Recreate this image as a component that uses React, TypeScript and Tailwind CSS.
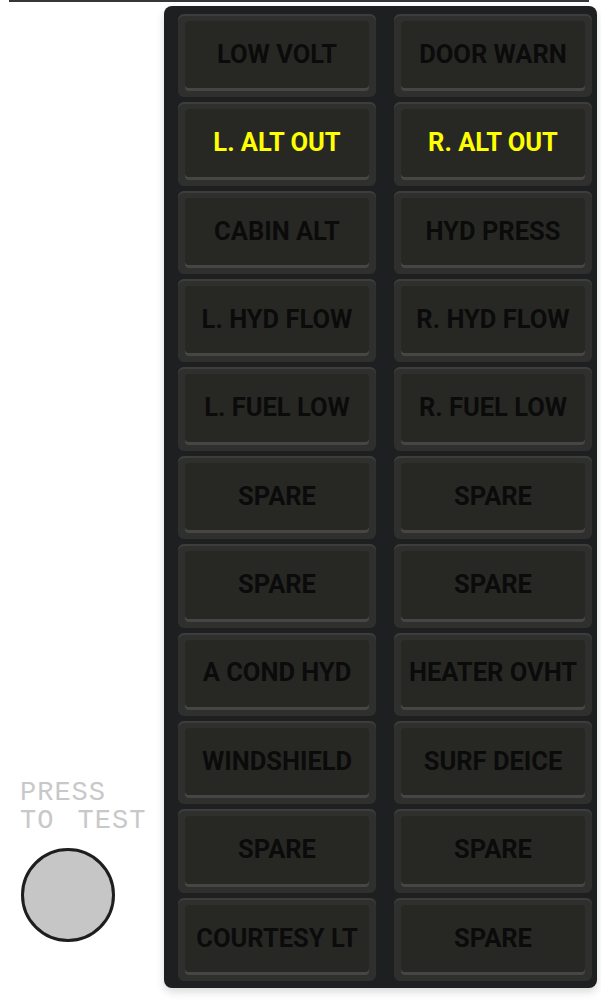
const annunciators: { label: string; lit?: boolean }[] = [
  { label: "LOW VOLT" },
  { label: "DOOR WARN" },
  { label: "L. ALT OUT", lit: true },
  { label: "R. ALT OUT", lit: true },
  { label: "CABIN ALT" },
  { label: "HYD PRESS" },
  { label: "L. HYD FLOW" },
  { label: "R. HYD FLOW" },
  { label: "L. FUEL LOW" },
  { label: "R. FUEL LOW" },
  { label: "SPARE" },
  { label: "SPARE" },
  { label: "SPARE" },
  { label: "SPARE" },
  { label: "A COND HYD" },
  { label: "HEATER OVHT" },
  { label: "WINDSHIELD" },
  { label: "SURF DEICE" },
  { label: "SPARE" },
  { label: "SPARE" },
  { label: "COURTESY LT" },
  { label: "SPARE" },
];

function Annunciator({ label, lit }: { label: string; lit?: boolean }) {
  return (
    <div className="rounded-[6px] bg-[#2f302e] p-[7px] pb-[9px] shadow-[inset_0_2px_0_#3d3e3c]">
      <div className="h-full rounded-[4px] bg-[#272824] shadow-[0_3px_0_#464745] flex items-center justify-center">
        <span
          className={`font-bold text-[25.5px] leading-none whitespace-nowrap ${lit ? "text-[#ffff00]" : "text-[#0b0b0b]"}`}
          style={{ fontFamily: "Roboto, 'Liberation Sans', sans-serif" }}
        >
          {label}
        </span>
      </div>
    </div>
  );
}

export default function App() {
  return (
    <div className="w-[601px] h-[1006px] bg-white overflow-hidden">
      <div className="ml-[9px] w-[580px] h-[2px] bg-[#35363a]" />
      <div className="flex mt-[4px]">
        {/* Test button */}
        <div className="w-[164px] h-[982px] flex flex-col justify-end pl-[20px] pb-[46px]">
          <div
            className="text-[27px] leading-[28px] tracking-[1px] text-[#c8c8c8] [word-spacing:6px] mb-[13px]"
            style={{ fontFamily: "'Liberation Mono', monospace" }}
          >
            <div>PRESS</div>
            <div>TO TEST</div>
          </div>
          <div className="ml-[1px] w-[94px] h-[94px] rounded-full bg-[#c6c6c6] border-[3px] border-[#1e1e1e]" />
        </div>

        {/* Annunciator panel */}
        <div className="w-[433px] h-[982px] rounded-[8px] bg-[#1e1f21] pt-[8px] pb-[7px] pl-[14px] pr-[5px] shadow-[0_4px_8px_rgba(0,0,0,0.15)]">
          <div className="grid grid-cols-2 grid-rows-11 gap-x-[18px] gap-y-[5px] h-full">
            {annunciators.map((a, i) => (
              <Annunciator key={i} label={a.label} lit={a.lit} />
            ))}
          </div>
        </div>
      </div>
    </div>
  );
}
